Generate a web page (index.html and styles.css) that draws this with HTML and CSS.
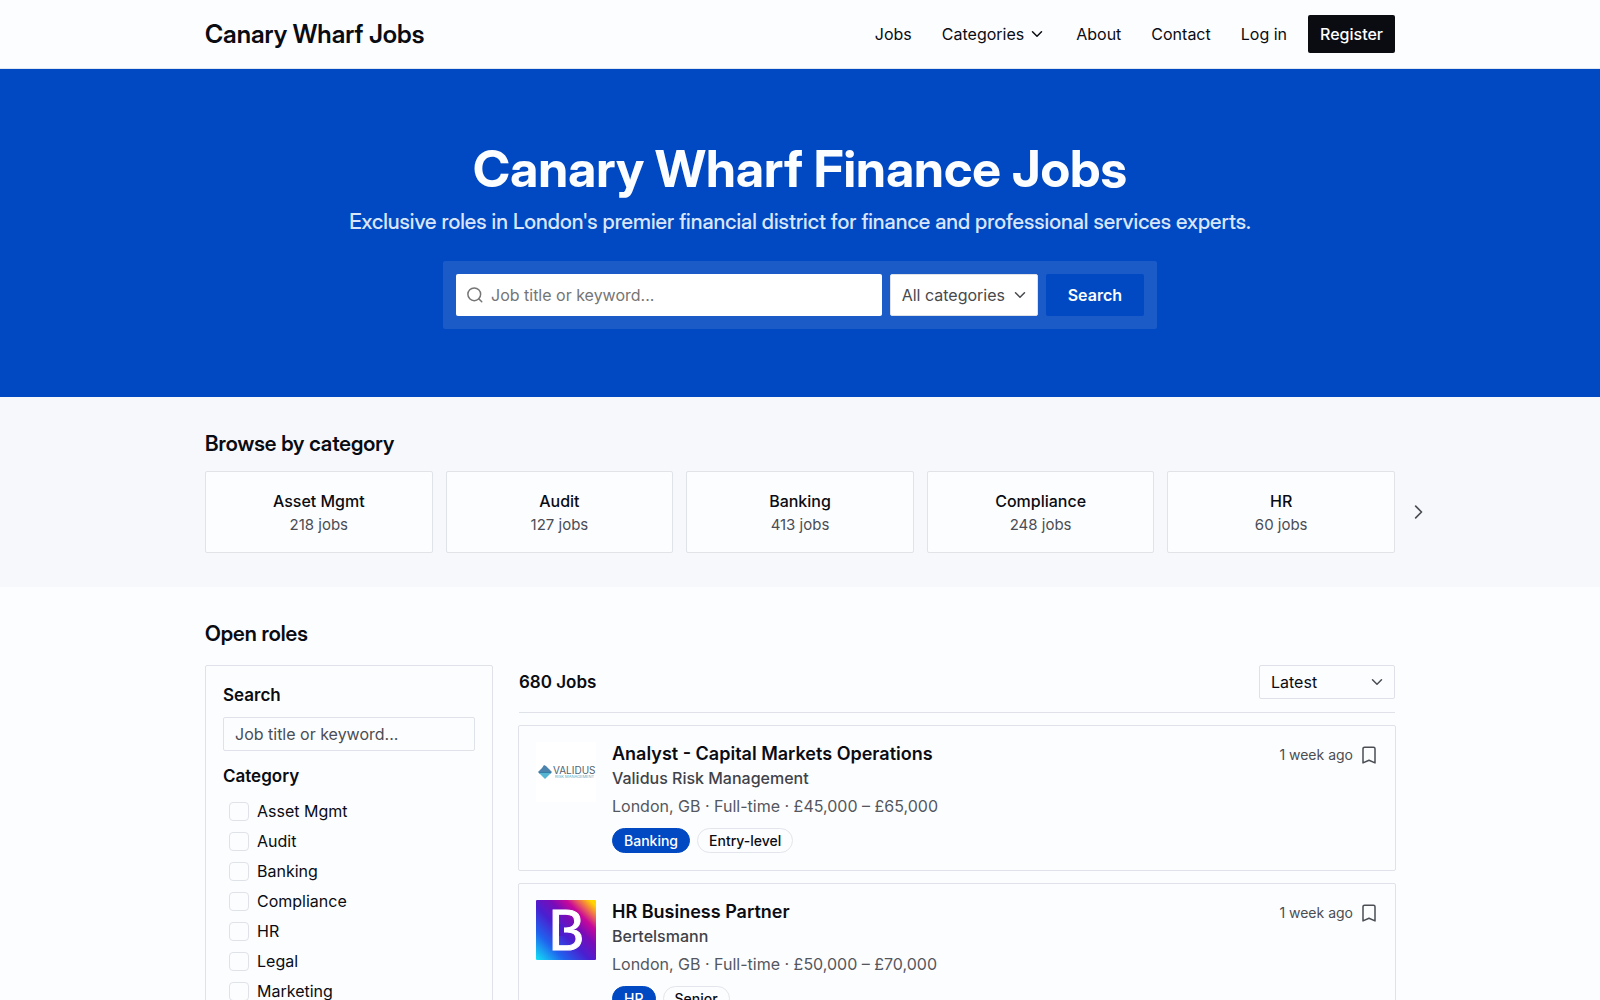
FILE: index.html
```html
<!DOCTYPE html>
<html lang="en">
<head>
    <meta charset="UTF-8">
    <meta name="viewport" content="width=device-width, initial-scale=1.0">
    <title>Canary Wharf Jobs</title>
    <link rel="stylesheet" href="styles.css">
</head>
<body>
    <!-- Shared icons -->
    <svg class="sprite" aria-hidden="true">
        <symbol id="chevron-down" viewBox="0 0 24 24"><path d="m6 9 6 6 6-6"/></symbol>
        <symbol id="chevron-right" viewBox="0 0 24 24"><path d="m8 5 7 7-7 7"/></symbol>
        <symbol id="search" viewBox="0 0 24 24"><circle cx="11" cy="11" r="8.500"/><path d="m21 21-4-4"/></symbol>
        <symbol id="bookmark" viewBox="0 0 24 24"><path d="M4 3.500a2 2 0 0 1 2-2h12a2 2 0 0 1 2 2v19L12 19l-8 3.500z"/></symbol>
    </svg>

    <header class="site-header">
        <div class="container header-inner">
            <a href="#" class="brand">Canary Wharf Jobs</a>
            <nav class="nav">
                <a href="#">Jobs</a>
                <button type="button" class="nav-menu">Categories <svg class="icon"><use href="#chevron-down"/></svg></button>
                <a href="#">About</a>
                <a href="#">Contact</a>
                <a href="#">Log in</a>
                <a href="#" class="register">Register</a>
            </nav>
        </div>
    </header>

    <section class="hero">
        <h1>Canary Wharf Finance Jobs</h1>
        <p>Exclusive roles in London's premier financial district for finance and professional services experts.</p>
        <form class="hero-search">
            <div class="hero-field">
                <svg class="icon"><use href="#search"/></svg>
                <input type="search" aria-label="Keyword" placeholder="Job title or keyword...">
            </div>
            <div class="select hero-select">
                <select aria-label="Category">
                    <option>All categories</option>
                </select>
                <svg class="icon"><use href="#chevron-down"/></svg>
            </div>
            <button type="submit">Search</button>
        </form>
    </section>

    <section class="browse">
        <div class="container">
            <h2>Browse by category</h2>
            <div class="category-grid">
                <a href="#" class="category"><strong>Asset Mgmt</strong><span>218 jobs</span></a>
                <a href="#" class="category"><strong>Audit</strong><span>127 jobs</span></a>
                <a href="#" class="category"><strong>Banking</strong><span>413 jobs</span></a>
                <a href="#" class="category"><strong>Compliance</strong><span>248 jobs</span></a>
                <a href="#" class="category"><strong>HR</strong><span>60 jobs</span></a>
                <button type="button" class="next" aria-label="Next"><svg class="icon"><use href="#chevron-right"/></svg></button>
            </div>
        </div>
    </section>

    <main class="container roles">
        <h2>Open roles</h2>
        <div class="roles-layout">
            <aside class="filters">
                <label class="filter-title" for="keyword">Search</label>
                <input type="text" id="keyword" class="filter-input" placeholder="Job title or keyword...">
                <fieldset>
                    <legend class="filter-title">Category</legend>
                    <label class="check"><input type="checkbox">Asset Mgmt</label>
                    <label class="check"><input type="checkbox">Audit</label>
                    <label class="check"><input type="checkbox">Banking</label>
                    <label class="check"><input type="checkbox">Compliance</label>
                    <label class="check"><input type="checkbox">HR</label>
                    <label class="check"><input type="checkbox">Legal</label>
                    <label class="check"><input type="checkbox">Marketing</label>
                </fieldset>
            </aside>

            <div class="results">
                <div class="results-bar">
                    <strong>680 Jobs</strong>
                    <div class="select sort-select">
                        <select aria-label="Sort by">
                            <option>Latest</option>
                        </select>
                        <svg class="icon"><use href="#chevron-down"/></svg>
                    </div>
                </div>

                <article class="job">
                    <svg class="logo" viewBox="0 0 60 60" role="img" aria-label="Validus">
                        <rect width="60" height="60" fill="#fff"/>
                        <path fill="#4b83ad" d="M2 30l4-4 2-3 2 1 3 3 3 3z"/>
                        <path fill="#347eaa" d="M2 30h14l-2 2H4z"/>
                        <path fill="#55b5d3" d="M3 31h12l-6 6z"/>
                        <text x="17" y="32" class="validus-name">VALIDUS</text>
                        <text x="19" y="36" class="validus-tag">RISK MANAGEMENT</text>
                    </svg>
                    <div class="job-body">
                        <h3><a href="#">Analyst - Capital Markets Operations</a></h3>
                        <p class="company">Validus Risk Management</p>
                        <p class="details">London, GB · Full-time · £45,000 – £65,000</p>
                        <div class="tags"><a href="#" class="tag primary">Banking</a><a href="#" class="tag">Entry-level</a></div>
                    </div>
                    <div class="job-meta">
                        <span>1 week ago</span>
                        <button type="button" aria-label="Save job"><svg class="icon"><use href="#bookmark"/></svg></button>
                    </div>
                </article>

                <article class="job">
                    <svg class="logo" viewBox="0 0 60 60" role="img" aria-label="Bertelsmann">
                        <defs>
                            <linearGradient id="bm" x1="0" y1="1" x2="1" y2="0">
                                <stop offset="0" stop-color="#12e4f5"/>
                                <stop offset=".24" stop-color="#2062ee"/>
                                <stop offset=".45" stop-color="#4a1fd0"/>
                                <stop offset=".62" stop-color="#7a0cb8"/>
                                <stop offset=".75" stop-color="#c8089a"/>
                                <stop offset=".85" stop-color="#ee6b50"/>
                                <stop offset=".95" stop-color="#ffd500"/>
                            </linearGradient>
                        </defs>
                        <rect width="60" height="60" rx="1" fill="url(#bm)"/>
                        <text x="12" y="50" class="bertelsmann-name">B</text>
                        <rect x="23" y="24" width="5" height="12" fill="#4f1ccc"/>
                    </svg>
                    <div class="job-body">
                        <h3><a href="#">HR Business Partner</a></h3>
                        <p class="company">Bertelsmann</p>
                        <p class="details">London, GB · Full-time · £50,000 – £70,000</p>
                        <div class="tags"><a href="#" class="tag primary">HR</a><a href="#" class="tag">Senior</a></div>
                    </div>
                    <div class="job-meta">
                        <span>1 week ago</span>
                        <button type="button" aria-label="Save job"><svg class="icon"><use href="#bookmark"/></svg></button>
                    </div>
                </article>
            </div>
        </div>
    </main>
</body>
</html>
```
FILE: styles.css
```css
* {
    box-sizing: border-box;
}
body {
    margin: 0;
    background-color: #fcfdff;
    color: #0a0c12;
    font-family: Inter, sans-serif;
    font-size: 16px;
    line-height: 26px;
}
h1, h2, h3, p {
    margin: 0;
}
h1, h2, .brand, .hero p {
    font-family: "Inter Display", Inter, sans-serif;
}
a {
    color: inherit;
    text-decoration: none;
}
button, input, select {
    font: inherit;
    color: inherit;
    margin: 0;
}
button {
    border: none;
    background: none;
    padding: 0;
    cursor: pointer;
}
.sprite {
    display: none;
}
.icon {
    width: 18px;
    height: 18px;
    flex: none;
    fill: none;
    stroke: currentColor;
    stroke-width: 2;
    stroke-linecap: round;
    stroke-linejoin: round;
}
.container {
    max-width: 1190px;
    margin: 0 auto;
}

/* Header */
.site-header {
    border-bottom: 1px solid #dfe8f0;
}
.header-inner {
    display: flex;
    justify-content: space-between;
    align-items: center;
    height: 68px;
}
.brand {
    font-size: 25px;
    font-weight: 600;
}
.nav {
    display: flex;
    align-items: center;
    gap: 30px;
}
.nav-menu {
    display: flex;
    align-items: center;
    gap: 4px;
}
.register {
    margin-left: -9px;
    padding: 6px 12px;
    border-radius: 2px;
    background-color: #0a0c12;
    color: #fff;
    font-weight: 500;
}

/* Hero */
.hero {
    display: flex;
    flex-direction: column;
    align-items: center;
    padding: 68px 20px;
    background-color: #0049c2;
    color: #fcfdff;
    text-align: center;
}
.hero h1 {
    font-size: 51px;
    font-weight: 700;
    line-height: 64px;
}
.hero p {
    margin: 4px 0 22px;
    color: #d9e6fa;
    font-size: 21px;
    font-weight: 500;
    line-height: 34px;
}
.hero-search {
    display: flex;
    gap: 8px;
    width: 100%;
    max-width: 714px;
    padding: 13px;
    border-radius: 2px;
    background-color: #1a5bc8;
}
.hero-field {
    display: flex;
    flex: 1;
    align-items: center;
    gap: 7px;
    padding: 0 10px;
    border-radius: 2px;
    background-color: #fff;
    color: #757575;
}
.hero-field input {
    flex: 1;
    min-width: 0;
    height: 42px;
    padding: 0;
    border: none;
    background: none;
}
.hero-search button {
    padding: 0 22px;
    border-radius: 2px;
    background-color: #0049c2;
    font-weight: 600;
}
.select {
    display: grid;
    align-items: center;
}
.select select, .select .icon {
    grid-area: 1 / 1;
}
.select select {
    appearance: none;
    width: 100%;
    height: 100%;
    padding: 0 11px;
    border: 1px solid #dee2e8;
    border-radius: 2px;
    background-color: #fff;
}
.select .icon {
    justify-self: end;
    margin-right: 9px;
    pointer-events: none;
}
.hero-select {
    width: 148px;
    color: #47494d;
}

/* Category cards */
.browse {
    padding: 34px 0;
    background-color: #f7f8fc;
}
h2 {
    font-size: 21px;
    font-weight: 600;
}
.category-grid {
    position: relative;
    display: grid;
    grid-template-columns: repeat(5, 1fr);
    gap: 13px;
    margin-top: 14px;
}
.category {
    display: flex;
    flex-direction: column;
    padding: 18px 17px 16px;
    border: 1px solid #e0e3e8;
    border-radius: 2px;
    background-color: #fcfdff;
    line-height: 23px;
    text-align: center;
}
.category strong {
    font-weight: 500;
}
.category span {
    color: #4a4d54;
    font-size: 15px;
}
/* Sits outside the grid, next to the last card */
.next {
    position: absolute;
    top: 0;
    bottom: 0;
    left: 100%;
    padding: 0 14px;
    color: #4a4d54;
}
.next .icon {
    display: block;
    width: 20px;
    height: 20px;
}

/* Open roles */
.roles {
    padding: 34px 0;
}
.roles-layout {
    display: grid;
    grid-template-columns: 288px 1fr;
    gap: 26px;
    margin-top: 18px;
}
.filters {
    padding: 16px 17px;
    border: 1px solid #dfe2e8;
    border-radius: 2px;
}
.filter-title {
    display: block;
    padding: 0;
    font-size: 17px;
    font-weight: 600;
}
.filter-input {
    width: 100%;
    height: 34px;
    margin: 9px 0 12px;
    padding: 0 11px;
    border: 1px solid #dfe2e8;
    border-radius: 2px;
    background-color: #fcfdff;
}
.filter-input::placeholder {
    color: #4a4d54;
}
fieldset {
    margin: 0;
    padding: 0;
    border: none;
}
legend {
    margin-bottom: 7px;
}
.check {
    display: flex;
    align-items: center;
    gap: 8px;
    padding-left: 6px;
    line-height: 30px;
}
.check input {
    appearance: none;
    width: 20px;
    height: 19px;
    border: 1px solid #dfe2e8;
    border-radius: 4px;
    background-color: #fcfdff;
}
.results-bar {
    display: flex;
    justify-content: space-between;
    align-items: center;
    padding-bottom: 13px;
    border-bottom: 1px solid #dfe2e8;
}
.results-bar strong {
    font-size: 17px;
    font-weight: 600;
}
.sort-select {
    width: 136px;
    height: 34px;
}
.sort-select select {
    background-color: #fcfdff;
}
.sort-select .icon {
    color: #4a4d54;
}
.job {
    display: flex;
    gap: 16px;
    margin: 12px -1px 0;
    padding: 16px 17px 17px;
    border: 1px solid #dfe2e8;
    border-radius: 2px;
}
.logo {
    flex: none;
    width: 60px;
    height: 60px;
}
.validus-name {
    fill: #4f6370;
    font-size: 10px;
}
.validus-tag {
    fill: #5fa9bd;
    font-size: 4px;
}
.bertelsmann-name {
    fill: #fff;
    stroke: #fff;
    stroke-width: 1px;
    font-family: Lato, sans-serif;
    font-size: 56px;
}
.job-body {
    flex: 1;
}
h3 {
    font-size: 18px;
    font-weight: 600;
    line-height: 23px;
}
.company {
    color: #3f4248;
    font-weight: 500;
}
.details {
    margin-top: 2px;
    color: #54575e;
}
.tags {
    display: flex;
    gap: 7px;
    margin-top: 9px;
}
.tag {
    padding: 0 11px;
    border: 1px solid #e2e5eb;
    border-radius: 13px;
    font-size: 14px;
    font-weight: 500;
    line-height: 23px;
}
.tag.primary {
    border-color: #0049c2;
    background-color: #0049c2;
    color: #fff;
}
.job-meta {
    display: flex;
    align-items: center;
    align-self: flex-start;
    gap: 7px;
    color: #4a4d54;
    font-size: 14px;
}
.job-meta .icon {
    display: block;
}
```
